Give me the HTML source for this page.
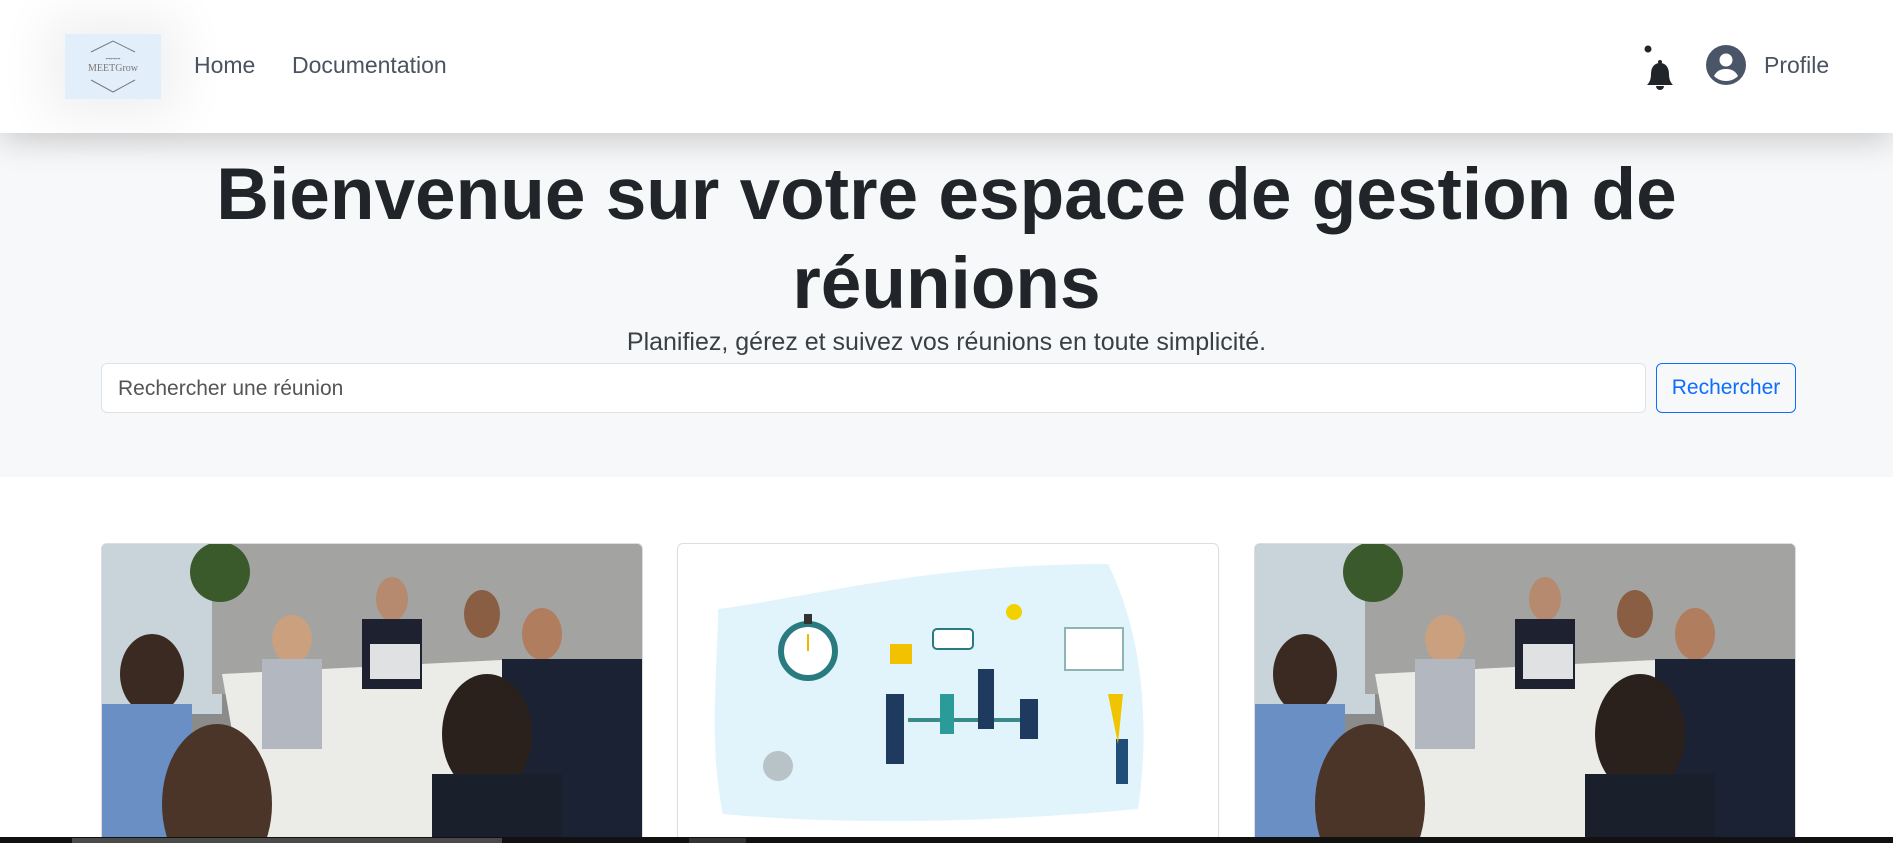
<!DOCTYPE html>
<html><head><meta charset="utf-8"><style>
*{box-sizing:border-box;margin:0;padding:0}
html,body{width:1893px;height:843px;overflow:hidden;background:#fff;font-family:"Liberation Sans",sans-serif}
.nav{position:absolute;left:0;top:0;width:1893px;height:133px;background:#fff;box-shadow:0 8px 30px rgba(0,0,0,.18);z-index:2}
.logo{position:absolute;left:65px;top:34px;width:96px;height:65px;background:#e3eefb;box-shadow:0 0 50px 20px rgba(0,0,0,.06)}
.nav a{position:absolute;top:52px;font-size:23px;color:#4a5361;text-decoration:none}
.hero{position:absolute;left:0;top:133px;width:1893px;height:344px;background:#f7f8f9}
h1{position:absolute;left:0;width:1893px;top:150px;text-align:center;font-size:73px;line-height:89px;font-weight:700;color:#212529}
.sub{position:absolute;left:0;width:1893px;top:328px;text-align:center;font-size:25px;color:#3a3f45;font-weight:300}
.inp{position:absolute;left:101px;top:363px;width:1545px;height:50px;background:#fff;border:1px solid #dee2e6;border-radius:6px;font-size:21px;color:#555;padding:13px 16px}
.btn{position:absolute;left:1656px;top:363px;width:140px;height:50px;border:1px solid #0d6efd;border-radius:6px;color:#0d6efd;font-size:21px;text-align:center;line-height:48px}
.card{position:absolute;top:543px;height:300px;border:1px solid #ddd;border-radius:6px;overflow:hidden;background:#fff}
.bar{position:absolute;left:0;top:837px;width:1893px;height:6px;background:#111}
</style></head><body>
<div class="nav">
 <div class="logo"><svg width="96" height="65" viewBox="0 0 96 65"><path d="M26 18 L48 7 L70 18 M26 46 L48 58 L70 46" stroke="#778" stroke-width="1" fill="none"/><text x="48" y="37" font-size="10" text-anchor="middle" fill="#777" font-family="Liberation Serif">MEETGrow</text><text x="48" y="27" font-size="6" text-anchor="middle" fill="#555">ꟷꟷꟷ</text></svg></div>
 <a style="left:194px">Home</a><a style="left:292px">Documentation</a>
 <svg style="position:absolute;left:1640px;top:42px" width="40" height="56" viewBox="0 0 40 56"><circle cx="8" cy="7" r="3.5" fill="#212529"/><path d="M20 21c-6 0-9 5-9 11 0 6-2 9-4 11h26c-2-2-4-5-4-11 0-6-3-11-9-11z" fill="#212529"/><circle cx="20" cy="20" r="2" fill="#212529"/><path d="M16 44a4 4 0 0 0 8 0z" fill="#212529"/></svg>
 <svg style="position:absolute;left:1706px;top:45px" width="40" height="40" viewBox="0 0 40 40"><circle cx="20" cy="20" r="20" fill="#4a5568"/><circle cx="20" cy="15" r="6.5" fill="#fff"/><path d="M8 31c3-6 8-7 12-7s9 1 12 7c-3 3-7 5-12 5s-9-2-12-5z" fill="#fff"/></svg>
 <a style="left:1764px">Profile</a>
</div>
<div class="hero"></div>
<h1>Bienvenue sur votre espace de gestion de<br>réunions</h1>
<div class="sub">Planifiez, gérez et suivez vos réunions en toute simplicité.</div>
<div class="inp">Rechercher une réunion</div>
<div class="btn">Rechercher</div>

<div class="card" style="left:101px;width:542px">
<svg width="542" height="300" viewBox="0 0 542 300"><rect width="542" height="300" fill="#8a8c8b"/><rect x="0" width="120" height="170" fill="#c9d3da"/><rect x="110" width="432" height="150" fill="#a3a4a2"/><path d="M120 130 L420 115 L480 300 L150 300z" fill="#ebebe8"/><circle cx="118" cy="28" r="30" fill="#3b5a2c"/><ellipse cx="190" cy="95" rx="20" ry="24" fill="#caa07e"/><rect x="160" y="115" width="60" height="90" fill="#b3b8c0"/><ellipse cx="290" cy="55" rx="16" ry="22" fill="#b58a6f"/><rect x="260" y="75" width="60" height="70" fill="#1e2230"/><ellipse cx="380" cy="70" rx="18" ry="24" fill="#8a5e43"/><ellipse cx="440" cy="90" rx="20" ry="26" fill="#b07d5e"/><rect x="400" y="115" width="142" height="185" fill="#1b2233"/><ellipse cx="50" cy="130" rx="32" ry="40" fill="#3a2a22"/><rect x="0" y="160" width="90" height="140" fill="#6a8fc4"/><ellipse cx="115" cy="260" rx="55" ry="80" fill="#4b3428"/><ellipse cx="385" cy="190" rx="45" ry="60" fill="#2a201c"/><rect x="330" y="230" width="130" height="70" fill="#1a1f2c"/><rect x="268" y="100" width="50" height="35" fill="#dfe1e3"/></svg></div>

<div class="card" style="left:677px;width:542px">
<svg width="542" height="300" viewBox="0 0 542 300"><path d="M40 65 C150 50 250 20 430 20 C470 100 470 200 460 265 C300 280 150 280 45 270 C30 200 40 120 40 65z" fill="#e2f4fb"/><circle cx="130" cy="107" r="27" fill="#fff" stroke="#2a7b7f" stroke-width="6"/><rect x="126" y="70" width="8" height="10" fill="#333"/><line x1="130" y1="107" x2="130" y2="90" stroke="#f2b705" stroke-width="2"/><rect x="212" y="100" width="22" height="20" fill="#f2c200"/><rect x="255" y="85" width="40" height="20" rx="4" fill="#fff" stroke="#2a7b7f" stroke-width="2"/><circle cx="336" cy="68" r="8" fill="#f2d100"/><rect x="387" y="84" width="58" height="42" fill="#fff" stroke="#8fb4b4" stroke-width="2"/><rect x="230" y="174" width="120" height="4" fill="#3a8a8a"/><rect x="208" y="150" width="18" height="70" fill="#1f3a5f"/><rect x="262" y="150" width="14" height="40" fill="#2a9b98"/><rect x="300" y="125" width="16" height="60" fill="#1f3a5f"/><rect x="342" y="155" width="18" height="40" fill="#1f3a5f"/><circle cx="100" cy="222" r="15" fill="#b8c3c8"/><rect x="438" y="195" width="12" height="45" fill="#1f4e79"/><path d="M430 150 L440 200 L445 150z" fill="#f0c400"/></svg></div>

<div class="card" style="left:1254px;width:542px">
<svg width="542" height="300" viewBox="0 0 542 300"><rect width="542" height="300" fill="#8a8c8b"/><rect x="0" width="120" height="170" fill="#c9d3da"/><rect x="110" width="432" height="150" fill="#a3a4a2"/><path d="M120 130 L420 115 L480 300 L150 300z" fill="#ebebe8"/><circle cx="118" cy="28" r="30" fill="#3b5a2c"/><ellipse cx="190" cy="95" rx="20" ry="24" fill="#caa07e"/><rect x="160" y="115" width="60" height="90" fill="#b3b8c0"/><ellipse cx="290" cy="55" rx="16" ry="22" fill="#b58a6f"/><rect x="260" y="75" width="60" height="70" fill="#1e2230"/><ellipse cx="380" cy="70" rx="18" ry="24" fill="#8a5e43"/><ellipse cx="440" cy="90" rx="20" ry="26" fill="#b07d5e"/><rect x="400" y="115" width="142" height="185" fill="#1b2233"/><ellipse cx="50" cy="130" rx="32" ry="40" fill="#3a2a22"/><rect x="0" y="160" width="90" height="140" fill="#6a8fc4"/><ellipse cx="115" cy="260" rx="55" ry="80" fill="#4b3428"/><ellipse cx="385" cy="190" rx="45" ry="60" fill="#2a201c"/><rect x="330" y="230" width="130" height="70" fill="#1a1f2c"/><rect x="268" y="100" width="50" height="35" fill="#dfe1e3"/></svg></div>

<div class="bar"><div style="position:absolute;left:72px;top:1px;width:430px;height:5px;background:#4a4a4a"></div><div style="position:absolute;left:689px;top:1px;width:57px;height:5px;background:#333"></div></div>
</body></html>
